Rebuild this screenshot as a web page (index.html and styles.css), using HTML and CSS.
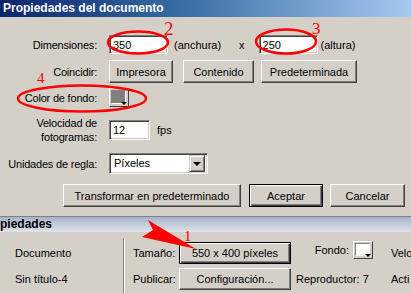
FILE: index.html
```html
<!DOCTYPE html>
<html lang="es">
<head>
    <meta charset="UTF-8">
    <title>Propiedades del documento</title>
    <link rel="stylesheet" href="styles.css">
</head>
<body>
    <div class="dialog">
        <div class="titlebar">Propiedades del documento</div>

        <div class="form">
            <div class="row row-dims">
                <span class="label">Dimensiones:</span>
                <input class="field field-dim" type="text" value="350">
                <span class="hint hint-w">(anchura)</span>
                <span class="times">x</span>
                <input class="field field-dim" type="text" value="250">
                <span class="hint hint-h">(altura)</span>
            </div>

            <div class="row row-match">
                <span class="label">Coincidir:</span>
                <button class="btn btn-print">Impresora</button>
                <button class="btn btn-content">Contenido</button>
                <button class="btn btn-default-size">Predeterminada</button>
            </div>

            <div class="row row-color">
                <span class="label">Color de fondo:</span>
                <span class="swatch"><span class="swatch-fill"></span><span class="swatch-arrow"></span></span>
            </div>

            <div class="row row-fps">
                <span class="label">Velocidad de<br>fotogramas:</span>
                <input class="field field-fps" type="text" value="12">
                <span class="hint hint-fps">fps</span>
            </div>

            <div class="row row-units">
                <span class="label">Unidades de regla:</span>
                <div class="combo">
                    <span class="combo-text">Píxeles</span>
                    <span class="combo-btn"><span class="tri"></span></span>
                </div>
            </div>

            <div class="actions">
                <button class="btn btn-transform">Transformar en predeterminado</button>
                <button class="btn btn-focus btn-ok">Aceptar</button>
                <button class="btn btn-cancel">Cancelar</button>
            </div>
        </div>
    </div>

    <div class="panel">
        <div class="panel-head">piedades</div>
        <div class="panel-body">
            <div class="doc-col">
                <div class="doc-row">Documento</div>
                <div class="doc-row">Sin título-4</div>
            </div>
            <div class="divider"></div>
            <div class="prop-grid">
                <span class="prop-label">Tamaño:</span>
                <button class="btn btn-focus btn-size">550 x 400 píxeles</button>
                <span class="prop-bg">Fondo: <span class="swatch swatch-white"><span class="swatch-fill"></span><span class="swatch-arrow"></span></span></span>
                <span class="prop-more">Velo</span>

                <span class="prop-label">Publicar:</span>
                <button class="btn btn-size">Configuración...</button>
                <span class="prop-player">Reproductor: 7</span>
                <span class="prop-more">Acti</span>
            </div>
        </div>
    </div>

    <svg class="marks" width="411" height="293" viewBox="0 0 411 293">
        <ellipse cx="138" cy="42.5" rx="30" ry="11" />
        <ellipse cx="286" cy="41.5" rx="30" ry="12" />
        <ellipse cx="82" cy="98.5" rx="64" ry="13" />
        <polygon class="arrow" points="148,220 196,249 142,237 153,230" />
        <text x="164" y="35" font-size="19">2</text>
        <text x="312" y="34" font-size="17">3</text>
        <text x="37" y="83" font-size="15">4</text>
        <text x="184" y="241" font-size="15">1</text>
    </svg>
</body>
</html>
```

FILE: styles.css
```css
body {
    margin: 0;
    width: 411px;
    height: 293px;
    overflow: hidden;
    position: relative;
    background-color: #d4d0c8;
    font-family: "Liberation Sans", Arial, sans-serif;
    font-size: 11px;
    color: #000;
}

.titlebar {
    height: 17px;
    line-height: 17px;
    padding-left: 3px;
    background: linear-gradient(to right, #0a246a, #3a6ea5 45%, #a6caf0);
    color: white;
    font-weight: bold;
    font-size: 12px;
}

.form {
    padding-top: 18px;
    display: flex;
    flex-direction: column;
}

.row {
    display: flex;
    align-items: center;
}

.label {
    width: 97px;
    margin-right: 12px;
    text-align: right;
    flex-shrink: 0;
    line-height: 14px;
    letter-spacing: -0.2px;
}

.row-dims { height: 19px; }
.row-match { height: 23px; margin-top: 6px; }
.row-color { height: 19px; margin-top: 5px; }
.row-fps { height: 28px; margin-top: 9px; }
.row-units { height: 21px; margin-top: 9px; }

/* sunken text field */
.field {
    box-sizing: border-box;
    height: 19px;
    margin: 0;
    padding: 0 3px;
    border: 1px solid;
    border-color: #808080 #fff #fff #808080;
    box-shadow: inset 1px 1px #404040, inset -1px -1px #d4d0c8;
    background: #fff;
    font: 11px "Liberation Sans", Arial, sans-serif;
    color: #000;
    outline: none;
}

.field-dim { width: 59px; }
.field-fps { width: 41px; height: 20px; }

.hint-w { margin-left: 6px; }
.times { margin: 0 14px 0 18px; }
.hint-h { margin-left: 3px; }
.hint-fps { margin-left: 7px; }

/* raised button */
.btn {
    box-sizing: border-box;
    height: 23px;
    margin: 0;
    padding: 0;
    border: 1px solid;
    border-color: #fff #404040 #404040 #fff;
    box-shadow: inset -1px -1px #808080;
    background: #d4d0c8;
    font: 11px "Liberation Sans", Arial, sans-serif;
    color: #000;
}

.btn-focus {
    border-color: #000;
    box-shadow: inset 1px 1px #fff, inset -1px -1px #404040, inset -2px -2px #808080;
}

.btn-print { width: 64px; }
.btn-content { width: 71px; margin-left: 10px; }
.btn-default-size { width: 96px; margin-left: 7px; }

.swatch {
    box-sizing: border-box;
    position: relative;
    display: inline-block;
    width: 20px;
    height: 19px;
    border: 1px solid;
    border-color: #fff #404040 #404040 #fff;
    background: #d4d0c8;
    vertical-align: middle;
}

.swatch-fill {
    position: absolute;
    left: 1px;
    top: 1px;
    right: 2px;
    bottom: 2px;
    background: #808080;
    border: 1px solid;
    border-color: #808080 #fff #fff #808080;
}

.swatch-arrow {
    position: absolute;
    right: 1px;
    bottom: 1px;
    width: 0;
    height: 0;
    border-left: 3px solid transparent;
    border-right: 3px solid transparent;
    border-top: 3px solid #000;
}

.swatch-white .swatch-fill {
    background: #fff;
}

/* dropdown */
.combo {
    box-sizing: border-box;
    display: flex;
    width: 99px;
    height: 21px;
    border: 1px solid;
    border-color: #808080 #fff #fff #808080;
    box-shadow: inset 1px 1px #404040, inset -1px -1px #d4d0c8;
    background: #fff;
    padding: 2px;
}

.combo-text {
    flex: 1;
    line-height: 15px;
    padding-left: 2px;
}

.combo-btn {
    box-sizing: border-box;
    width: 16px;
    height: 17px;
    margin-top: -1px;
    border: 1px solid;
    border-color: #d4d0c8 #404040 #404040 #d4d0c8;
    box-shadow: inset 1px 1px #fff, inset -1px -1px #808080;
    background: #d4d0c8;
    display: flex;
    align-items: center;
    justify-content: center;
}

.tri {
    width: 0;
    height: 0;
    border-left: 4px solid transparent;
    border-right: 4px solid transparent;
    border-top: 4px solid #000;
}

.actions {
    display: flex;
    justify-content: flex-end;
    gap: 7px;
    margin-top: 10px;
    padding-right: 6px;
}

.btn-transform { width: 178px; margin-right: 1px; }
.btn-ok { width: 74px; }
.btn-cancel { width: 75px; }

/* properties panel */
.panel {
    margin-top: 9px;
    border-top: 1px solid #808080;
}

.panel-head {
    height: 15px;
    line-height: 15px;
    background: linear-gradient(to bottom, #a7b3cb, #dfe3eb);
    font-weight: bold;
    font-size: 12px;
}

.panel-body {
    display: grid;
    grid-template-columns: 123px 2px 1fr;
    padding-top: 6px;
}

.doc-col {
    padding: 4px 0 0 15px;
    display: flex;
    flex-direction: column;
    gap: 4px;
}

.doc-row {
    height: 22px;
    line-height: 22px;
}

.divider {
    border-left: 1px solid #808080;
    border-right: 1px solid #fff;
    height: 60px;
}

.prop-grid {
    display: grid;
    grid-template-columns: 46px 112px 100px auto;
    grid-template-rows: 22px 22px;
    row-gap: 4px;
    padding: 4px 0 0 8px;
    align-items: center;
    white-space: nowrap;
}

.btn-size {
    height: 22px;
    width: 112px;
}

.prop-bg {
    display: flex;
    justify-content: flex-end;
    align-items: center;
    gap: 4px;
    padding-right: 18px;
    align-self: start;
    margin-top: -2px;
    height: 19px;
}

.prop-bg .swatch {
    height: 18px;
}

.prop-player {
    padding-left: 5px;
}

/* red annotations drawn on top */
.marks {
    position: absolute;
    left: 0;
    top: 0;
    pointer-events: none;
}

.marks ellipse {
    fill: none;
    stroke: #f00;
    stroke-width: 2.5;
}

.marks .arrow {
    fill: #f00;
}

.marks text {
    fill: #f00;
    font-family: "Liberation Serif", "Times New Roman", serif;
}
```
